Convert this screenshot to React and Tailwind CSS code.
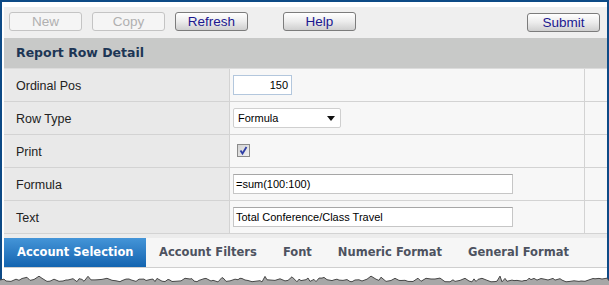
import React from "react";

function tornPaths() {
  let s = 11;
  const rnd = () => {
    s = (s * 9301 + 49297) % 233280;
    return s / 233280;
  };
  const pts = [[0, 7]];
  let x = 0;
  while (x < 612) {
    x += 2 + Math.floor(rnd() * 4);
    const big = rnd() < 0.12 ? -2 : 0;
    pts.push([x, 5 + rnd() * 4 + big]);
  }
  const line = "M" + pts.map((p) => `${p[0]} ${p[1].toFixed(1)}`).join(" L");
  const fill = line + " L612 12 L0 12 Z";
  return { line, fill };
}

const torn = tornPaths();

function Btn({ children, disabled, className = "" }) {
  return (
    <div
      className={
        "h-[19px] w-[73px] flex items-center justify-center rounded-[3px] border text-[13.5px] leading-none " +
        (disabled
          ? "border-[#c4c4c4] bg-[#f5f5f5] text-[#b0b0b0] "
          : "border-[#7c7c7c] bg-gradient-to-b from-[#ffffff] via-[#ececec] to-[#cfcfcf] text-[#1b1890] ") +
        className
      }
    >
      {children}
    </div>
  );
}

function Row({ label, children }) {
  return (
    <div className="flex h-[33px] border-b border-[#d3d3d3]">
      <div className="w-[226px] bg-[#e9e9e9] border-r border-[#d3d3d3] flex items-center pl-[12px] pt-[2px] text-[12.5px] text-[#222]">
        {label}
      </div>
      <div className="w-[355px] bg-[#f7f7f7] border-r border-[#d3d3d3] flex items-center pl-[3px]">
        {children}
      </div>
      <div className="flex-1 bg-[#f7f7f7]" />
    </div>
  );
}

export default function App() {
  return (
    <div
      className="relative w-[609px] h-[285px] overflow-hidden bg-white"
      style={{ fontFamily: '"Liberation Sans", Arial, sans-serif' }}
    >
      <div className="h-[285px] border-l-2 border-r-2 border-t-2 border-[#0d4a86] pl-[2px] pt-[5px]">
        {/* toolbar */}
        <div className="h-[31px] bg-[#efefef] flex items-start pt-[5px]">
          <Btn disabled className="ml-[5px]">New</Btn>
          <Btn disabled className="ml-[10px]">Copy</Btn>
          <Btn className="ml-[10px] w-[72px]">Refresh</Btn>
          <Btn className="ml-[35px] w-[72px]">Help</Btn>
          <Btn className="ml-auto mr-[7px] mt-[1px]">Submit</Btn>
        </div>
        {/* header */}
        <div
          className="h-[31px] bg-[#c8c9c8] border-b border-[#dcdcdc] flex items-center pl-[12px] text-[12.5px] font-bold text-[#1d3655]"
          style={{ fontFamily: '"DejaVu Sans", Verdana, sans-serif' }}
        >
          Report Row Detail
        </div>
        <Row label="Ordinal Pos">
          <div className="w-[59px] h-[20px] bg-white border border-[#b3c7dd] flex items-center justify-end pr-[3px] text-[11px] text-black">
            150
          </div>
        </Row>
        <Row label="Row Type">
          <div className="w-[108px] h-[20px] bg-white border border-[#cfcfcf] rounded-[2px] flex items-center pl-[4px] pr-[5px] text-[11px] text-black">
            <span className="flex-1">Formula</span>
            <svg width="8" height="5" viewBox="0 0 8 5">
              <path d="M0 0 H8 L4 5 Z" fill="#111" />
            </svg>
          </div>
        </Row>
        <Row label="Print">
          <div className="ml-[4px] mt-[-2px] w-[13px] h-[13px] border border-[#8a8a8a] bg-gradient-to-br from-[#d2d2d2] to-[#f0f0f0] flex items-center justify-center">
            <svg width="11" height="11" viewBox="0 0 11 11">
              <path d="M2.5 5.5 L4.5 8.5 L8.5 2" fill="none" stroke="#2f3fa6" strokeWidth="1.8" />
            </svg>
          </div>
        </Row>
        <Row label="Formula">
          <div className="w-[280px] h-[20px] bg-white border border-[#c6c6c6] border-t-[#a6a6a6] flex items-center pl-[2px] text-[11px] text-black">
            =sum(100:100)
          </div>
        </Row>
        <Row label="Text">
          <div className="w-[280px] h-[20px] bg-white border border-[#c6c6c6] border-t-[#a6a6a6] flex items-center pl-[2px] text-[11px] text-black">
            Total Conference/Class Travel
          </div>
        </Row>
        <div className="h-[4px] bg-[#ececec]" />
        {/* tabs */}
        <div
          className="h-[30px] bg-[#f6f6f6] border-b border-[#cfcfcf] flex items-stretch text-[11.5px] font-bold text-[#4d5260]"
          style={{ fontFamily: '"DejaVu Sans", Verdana, sans-serif' }}
        >
          <div className="w-[142px] bg-gradient-to-b from-[#4495d8] to-[#1264b0] text-white flex items-center pl-[13px]">
            Account Selection
          </div>
          <div className="flex items-center px-[13px]">Account Filters</div>
          <div className="flex items-center px-[13px]">Font</div>
          <div className="flex items-center px-[13px]">Numeric Format</div>
          <div className="flex items-center px-[13px]">General Format</div>
        </div>
      </div>
      {/* torn paper edge */}
      <svg
        className="absolute left-0 top-[273px]"
        width="609"
        height="12"
        viewBox="0 0 609 12"
      >
        <path d={torn.fill} fill="#a7a7a7" />
        <path d={torn.line} fill="none" stroke="#474747" strokeWidth="1" />
      </svg>
    </div>
  );
}
